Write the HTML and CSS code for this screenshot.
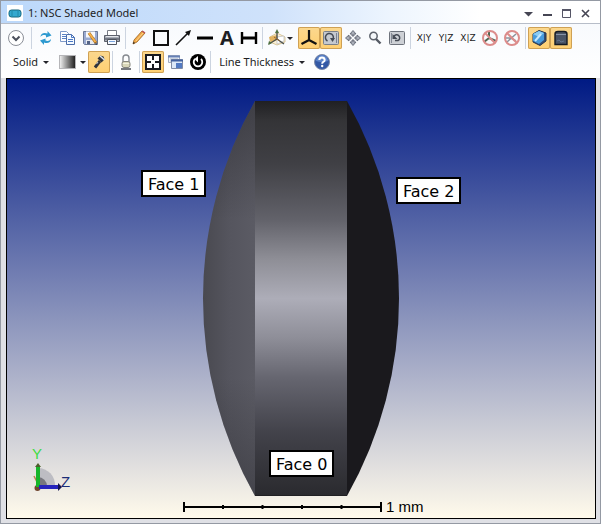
FILE: index.html
```html
<!DOCTYPE html>
<html lang="en">
<head>
<meta charset="utf-8">
<title>1: NSC Shaded Model</title>
<link rel="stylesheet" href="styles.css">
</head>
<body>
<main class="window">
  <header class="titlebar">
    <svg class="app-icon" viewBox="0 0 16 16" aria-hidden="true"><rect width="16" height="16" fill="#fff"/><rect x="2" y="5" width="12" height="7" rx="2.500" fill="#35a9cf" stroke="#17677f"/><path d="M5 5v7M11 5v7" stroke="#2389a8"/></svg>
    <h1 class="title">1: NSC Shaded Model</h1>
    <div class="window-controls">
      <button class="control" aria-label="Window menu"><svg viewBox="0 0 19 20"><path d="M5 9h9l-4.500 4.500z" fill="#454553"/></svg></button>
      <button class="control" aria-label="Minimize"><svg viewBox="0 0 19 20"><path d="M5 12h9" stroke="#454553" stroke-width="2"/></svg></button>
      <button class="control" aria-label="Maximize"><svg viewBox="0 0 19 20"><path d="M5.500 7v7.500h8V7" fill="none" stroke="#555566"/><path d="M5 7h9" stroke="#555566" stroke-width="2"/></svg></button>
      <button class="control" aria-label="Close"><svg viewBox="0 0 19 20"><path d="M6 7l7 7M13 7l-7 7" stroke="#454553" stroke-width="1.600"/></svg></button>
    </div>
  </header>

  <div class="toolbars">
    <div class="toolbar">
      <button class="tool" aria-label="Settings"><svg viewBox="0 0 22 22"><circle cx="11" cy="11" r="7.500" fill="#fff" stroke="#8b8f98"/><path d="M7.500 9.500l3.500 3.500 3.500-3.500" fill="none" stroke="#4b505c" stroke-width="2"/></svg></button>
      <span class="separator wide"></span>
      <button class="tool" aria-label="Update"><svg viewBox="0 0 22 22"><path d="M5.500 10C5.500 6.500 9 5 12.500 6.500V4l4 4.500-5.500 2V8.500C9 7.500 7 8 5.500 10zM16 12c0 3.500-3.500 5-7 3.500V18l-4-4.500 5.500-2v2c2 1 4 .5 5.500-1.500z" fill="#2e9ad0"/></svg></button>
      <button class="tool" aria-label="Copy"><svg viewBox="0 0 22 22"><path d="M3.500 4.500h6l2 2v8h-8z" fill="#fff" stroke="#7f9ac9"/><path d="M5 7.500h4M5 9.500h4M5 11.500h4" stroke="#5982c6"/><path d="M9.500 7.500h5l3 3v7h-8z" fill="#f5faff" stroke="#4b6ca8"/><path d="M14.500 7.500v3h3M11 12.500h5M11 14.500h5" fill="none" stroke="#4b78c4"/></svg></button>
      <button class="tool" aria-label="Save"><svg viewBox="0 0 22 22"><path d="M4.500 4.500h14v13h-13l-1-1z" fill="#9aabd2" stroke="#6b7895"/><path d="M7 4.500h9v6H7z" fill="#f7f8fb"/><path d="M7 13h8v4H7z" fill="#e6e9ef"/><path d="M8 14h3v3H8z" fill="#546386"/><path d="M10 6l7 10" stroke="#a56d20" stroke-width="3"/><path d="M10 6l6.500 9" stroke="#f5b14b" stroke-width="2"/><path d="M16 17l2 1-.5-2z" fill="#333"/></svg></button>
      <button class="tool" aria-label="Print"><svg viewBox="0 0 22 22"><path d="M6.500 9V3.500h9V9" fill="#fff" stroke="#777b84"/><path d="M3.500 8.500h15v6h-15z" fill="#a6abb5" stroke="#5c606b"/><path d="M5 9.500h12" stroke="#e4e6ea"/><path d="M4 12h14" stroke="#444954"/><path d="M6.500 12.500h9v5h-9z" fill="#f6f9ff" stroke="#4e535e"/><path d="M8 14.500h6" stroke="#79a4dc"/></svg></button>
      <span class="separator"></span>
      <button class="tool" aria-label="Pencil"><svg viewBox="0 0 22 22"><path d="M5 17l1-4 8-9 3 2-8 9z" fill="#f4aa4a" stroke="#99631f" stroke-width=".8"/><path d="M8 14l7-8" stroke="#fbd78c"/><path d="M13.500 4.500l1-1 3 2-1 1z" fill="#b9565a"/><path d="M5 17l.6-2.300 1.400 1.300z" fill="#222"/></svg></button>
      <button class="tool" aria-label="Rectangle"><svg viewBox="0 0 22 22"><path d="M4 4h14v14H4z" fill="none" stroke="#111" stroke-width="2"/></svg></button>
      <button class="tool" aria-label="Arrow"><svg viewBox="0 0 22 22"><path d="M4 18L16 6" stroke="#111" stroke-width="1.600"/><path d="M19 3l-2 6-4-4z" fill="#111"/></svg></button>
      <button class="tool" aria-label="Line"><svg viewBox="0 0 22 22"><path d="M3 11h16" stroke="#000" stroke-width="3"/></svg></button>
      <button class="tool letter">A</button>
      <button class="tool" aria-label="Dimension"><svg viewBox="0 0 22 22"><path d="M4 5v12M18 5v12" stroke="#000" stroke-width="2.400"/><path d="M5 11h12" stroke="#000" stroke-width="3"/></svg></button>
      <span class="separator"></span>
      <button class="tool drop" aria-label="View orientation"><svg viewBox="0 0 22 22"><path d="M5 10l7-4 8 4v5l-8 3-7-3z" fill="#fbf1d8" stroke="#cdb883" stroke-width=".8"/><path d="M12 10l7-1v5l-7 3z" fill="#fff" stroke="#bbb" stroke-width=".7"/><path d="M4 10l8-2v5l-6 3z" fill="#dda84b" opacity=".85"/><path d="M12 4v8M12 12l-8 5M12 12l7 5" fill="none" stroke="#4a5150" stroke-width="1.400"/><path d="M12 2l-2 4h4zM3 18l1-4 3 2z" fill="#4f7040"/><path d="M9 10l6 4" stroke="#9a6a31"/></svg><span class="caret"></span></button>
      <button class="tool active" aria-label="Show axes" aria-pressed="true"><svg viewBox="0 0 22 22"><path d="M11 3v10L3.500 17M11 13l7.500 4" fill="none" stroke="#111" stroke-width="2.200"/></svg></button>
      <button class="tool active" aria-label="Rotate" aria-pressed="true"><svg viewBox="0 0 22 22"><rect x="3.500" y="4.500" width="15" height="13" rx="1" fill="#c5c9cf" stroke="#7b8088"/><path d="M7.500 14a4 4 0 1 1 5-1" fill="none" stroke="#454b55" stroke-width="1.500"/><path d="M10 11h5l-2.500 4z" fill="#454b55"/><path d="M16.500 6v10" stroke="#7a8190"/></svg></button>
      <button class="tool" aria-label="Pan"><svg viewBox="0 0 22 22"><path d="M11 3.500L14 7h-2v2h-2V7H8zM11 18.500L8 15h2v-2h2v2h2zM3.500 11L7 8v2h2v2H7v2zM18.500 11L15 14v-2h-2v-2h2V8z" fill="#a9aeb8" stroke="#626875" stroke-width=".9"/></svg></button>
      <button class="tool" aria-label="Zoom"><svg viewBox="0 0 22 22"><circle cx="9.500" cy="9" r="3.700" fill="#f4f7fa" stroke="#5e636d" stroke-width="1.500"/><path d="M12 12l4.500 4.500" stroke="#555a64" stroke-width="2.400"/></svg></button>
      <button class="tool" aria-label="Reset view"><svg viewBox="0 0 22 22"><rect x="3.500" y="4.500" width="15" height="13" rx="1" fill="#cdd0d5" stroke="#6e737c"/><path d="M9 13.500h3a3 3 0 1 0-4-4" fill="none" stroke="#454b55" stroke-width="1.500"/><path d="M6.500 7v5h5z" fill="#454b55"/><path d="M5.500 6v10" stroke="#858b96"/></svg></button>
      <span class="separator"></span>
      <button class="tool plane">X|Y</button>
      <button class="tool plane">Y|Z</button>
      <button class="tool plane">X|Z</button>
      <button class="tool" aria-label="Hide axes"><svg viewBox="0 0 22 22"><path d="M10 5v6l-5 4M10 11l7 3" fill="none" stroke="#506653" stroke-width="2"/><circle cx="11" cy="11" r="7" fill="none" stroke="#dc8c8b" stroke-width="2"/><path d="M6 6l10 10" stroke="#dc8c8b" stroke-width="2"/></svg></button>
      <button class="tool" aria-label="Hide rays"><svg viewBox="0 0 22 22"><path d="M6 15l9-8M5 11h5l5 3" fill="none" stroke="#8b929c" stroke-width="1.500"/><circle cx="11" cy="11" r="7" fill="none" stroke="#dc8c8b" stroke-width="2"/><path d="M6 6l10 10" stroke="#dc8c8b" stroke-width="2"/></svg></button>
      <span class="separator"></span>
      <button class="tool active" aria-label="Solid faces" aria-pressed="true"><svg viewBox="0 0 22 22"><path d="M5 7l6-3.500L18 6v8l-6 4.500L5 15z" fill="#344d72" stroke="#26364f"/><path d="M5 7l6-3 5 2v7l-5 4-6-3z" fill="#489bdc"/><path d="M5 7l6-3 5 2-5 4z" fill="#8bccf4"/><path d="M7 14l6-7" stroke="#c4e8ff" stroke-width="2"/></svg></button>
      <button class="tool active" aria-label="Dark solid" aria-pressed="true"><svg viewBox="0 0 22 22"><path d="M5 7q0-2.500 3-2.500h6q3 0 3 2.500v10.500H5z" fill="#4a5465" stroke="#161b24" stroke-width="1.400"/><path d="M6 7.500h10" stroke="#8793a6"/><path d="M7 14l2-1 2 2 3-1" fill="none" stroke="#65758e"/></svg></button>
    </div>

    <div class="toolbar second">
      <button class="text-tool">Solid<span class="caret"></span></button>
      <button class="tool drop" aria-label="Background"><span class="swatch"></span><span class="caret"></span></button>
      <button class="tool active" aria-label="Lighting" aria-pressed="true"><svg viewBox="0 0 22 22"><path d="M7 16.500L12 10" stroke="#30343c" stroke-width="3"/><path d="M9.500 7.500l4 4 3-3-1-3-3-1z" fill="#30343c"/><path d="M12 5l4.500 4" stroke="#dce3ef" stroke-width="1.500"/><path d="M8.500 13l1.500-2" stroke="#c8ccd4"/></svg></button>
      <span class="separator"></span>
      <button class="tool" aria-label="Lock"><svg viewBox="0 0 22 22"><path d="M8 11V7a3 3 0 0 1 6 0v4" fill="none" stroke="#868a90" stroke-width="1.400"/><rect x="7" y="10.500" width="8" height="6" rx="2" fill="#d9d7b9" stroke="#84847d"/><path d="M8 12.500h6" stroke="#f3f2df"/><path d="M6 18h10" stroke="#494d53" stroke-width="1.500"/></svg></button>
      <span class="separator"></span>
      <button class="tool active" aria-label="Fit window" aria-pressed="true"><svg viewBox="0 0 22 22"><path d="M4 4h14v14H4z" fill="#fff" stroke="#17191f" stroke-width="2"/><path d="M11 5v4M11 13v4M5 11h4M13 11h4" stroke="#17191f" stroke-width="2"/></svg></button>
      <button class="tool" aria-label="Clone window"><svg viewBox="0 0 22 22"><path d="M4.500 4.500h11v7h-11z" fill="#eef4fc" stroke="#a2abc0"/><path d="M4 5.500h12" stroke="#6680b5" stroke-width="2"/><path d="M6 8h8M6 10h6" stroke="#a8b1c1"/><path d="M7.500 8.500h11v9h-11z" fill="#dce8f8" stroke="#818ca5"/><path d="M7 9.500h12" stroke="#44629f" stroke-width="2"/><path d="M12 12h6v5h-6z" fill="#537ac2"/></svg></button>
      <button class="tool" aria-label="Auto update"><svg viewBox="0 0 22 22"><circle cx="12" cy="11" r="8" fill="#000"/><path d="M9 8a4.300 4.300 0 1 0 6 0" fill="none" stroke="#fff" stroke-width="1.800"/><path d="M12 5v6.500L8.500 8z" fill="#fff"/></svg></button>
      <span class="separator"></span>
      <button class="text-tool">Line Thickness<span class="caret"></span></button>
      <button class="tool" aria-label="Help"><svg viewBox="0 0 22 22"><circle cx="11" cy="11" r="7.500" fill="#3459a5" stroke="#7e8ca9"/><path d="M5 10a6 6 0 0 1 12 0q-6 2-12 0z" fill="#5f86ca"/><path d="M8.300 9q.2-2.500 2.700-2.500T13.700 9q0 1.500-1.700 2.200-.8.400-.8 1.600" fill="none" stroke="#fff" stroke-width="2"/><circle cx="11.200" cy="15" r="1.200" fill="#fff"/></svg></button>
    </div>
  </div>

  <section class="viewport" aria-label="Shaded model view">
    <svg class="scene" viewBox="7 79 588 439">
      <defs>
        <linearGradient id="edge" x1="0" y1="0" x2="0" y2="1">
          <stop offset="0" stop-color="#202023"/><stop offset=".05" stop-color="#343437"/><stop offset=".16" stop-color="#404045"/><stop offset=".3" stop-color="#62626a"/><stop offset=".4" stop-color="#8e8e96"/><stop offset=".5" stop-color="#adadb8"/><stop offset=".6" stop-color="#8e8e98"/><stop offset=".7" stop-color="#666670"/><stop offset=".84" stop-color="#42424a"/><stop offset="1" stop-color="#2a2a2e"/>
        </linearGradient>
        <linearGradient id="left-face" x1="0" y1="0" x2="1" y2="0"><stop offset="0" stop-color="#494950"/><stop offset=".5" stop-color="#55555e"/><stop offset="1" stop-color="#5b5b64"/></linearGradient>
        <linearGradient id="shade" x1="0" y1="0" x2="0" y2="1"><stop offset="0" stop-color="#222226" stop-opacity=".5"/><stop offset=".3" stop-color="#222226" stop-opacity="0"/><stop offset=".7" stop-color="#222226" stop-opacity="0"/><stop offset="1" stop-color="#222226" stop-opacity=".4"/></linearGradient>
      </defs>
      <path d="M255 101A401 401 0 0 0 255 496z" fill="url(#left-face)"/>
      <path d="M255 101A401 401 0 0 0 255 496z" fill="url(#shade)"/>
      <path d="M347 101A401 401 0 0 1 347 496z" fill="#1a191d"/>
      <path d="M255 101h92v395h-92z" fill="url(#edge)"/>
      <path d="M255 101.500h92M255 495.500h92" stroke="#202023"/>

      <g class="face-label">
        <rect x="142" y="171" width="63" height="25"/><text x="148" y="190">Face 1</text>
        <rect x="397" y="178" width="63" height="25"/><text x="403" y="197">Face 2</text>
        <rect x="270" y="451" width="63" height="25"/><text x="276" y="470">Face 0</text>
      </g>

      <path d="M183 507h198M184 502v10M381 502v10" fill="none" stroke="#000" stroke-width="2"/>
      <path d="M223 505v4M262.500 505v4M302 505v4M341.500 505v4" stroke="#000" stroke-width="2"/>
      <text class="scale-text" x="386" y="512">1 mm</text>

      <path d="M38 468a17 17 0 0 1 17 18H38z" fill="#bdbdc3"/>
      <path d="M38 477a9 9 0 0 1 9 9h-9z" fill="#77777e"/>
      <path d="M34 476l6 12" stroke="#b98252" stroke-width="1.500"/>
      <circle cx="37.500" cy="488" r="3" fill="#70452e"/>
      <path d="M38 487V466" stroke="#16b52a" stroke-width="4"/><path d="M38 463l-3 4h6z" fill="#4c5e2c"/>
      <path d="M39 487h19" stroke="#2624bd" stroke-width="4"/><path d="M62 487l-4-4v8z" fill="#14144e"/>
      <text class="axis-y" x="32" y="459">Y</text>
      <text class="axis-z" x="61" y="487">Z</text>
    </svg>
  </section>
</main>
</body>
</html>
```
FILE: styles.css
```css
* { box-sizing: border-box; }

body {
  margin: 0;
  background: #fff;
  color: #1e1e24;
  font: 11px/16px "Noto Sans", "Open Sans", sans-serif;
}

button {
  margin: 0;
  padding: 0;
  border: 0;
  background: none;
  color: inherit;
  font: inherit;
}

.window {
  display: flex;
  flex-direction: column;
  height: 100vh;
  border: 1px solid #9499a3;
  background: #dfe0e5;
}

.titlebar {
  display: flex;
  align-items: center;
  flex: none;
  height: 23px;
  padding: 2px 5px 0 6px;
  border-bottom: 1px solid #b7bdc8;
  background: linear-gradient(90deg, #bcd8fa, #cfe2fb 45%, #edf5fe 65%, #fff 80%);
}

.app-icon { width: 16px; height: 16px; }

.title {
  flex: 1;
  margin: 0 0 0 5px;
  font-size: 11px;
  font-weight: 400;
}

.window-controls { display: flex; }

.control { width: 19px; height: 20px; }

.control svg,
.tool svg { display: block; }

.toolbars {
  flex: none;
  height: 54px;
  padding: 2px 4px;
  background: linear-gradient(#f8fafd, #fff);
}

.toolbar {
  display: flex;
  align-items: center;
  height: 24px;
}

.tool {
  flex: none;
  width: 22px;
  height: 22px;
}

.tool svg { width: 22px; height: 22px; }

.active {
  border-radius: 2px;
  background: linear-gradient(#fbd88f, #ffcf70);
  box-shadow: inset 0 0 0 1px #cfa154;
}

.drop {
  display: flex;
  align-items: center;
  width: 33px;
}

.caret {
  display: inline-block;
  border: 3px solid transparent;
  border-top: 3px solid #24242a;
  border-bottom: 0;
}

.letter {
  font: 700 20px/22px "Noto Sans", sans-serif;
}

.plane {
  color: #222;
  font: 9px/22px "DejaVu Sans", sans-serif;
  white-space: nowrap;
}

.separator {
  flex: none;
  width: 1px;
  height: 22px;
  margin: 0 2px;
  background: #ccd4e0;
}

.separator.wide { margin: 0 3px 0 4px; }

.text-tool {
  display: flex;
  align-items: center;
  gap: 5px;
  padding: 0 6px;
  line-height: 22px;
}

.second { padding-left: 2px; }

.swatch {
  width: 17px;
  height: 14px;
  margin: 0 4px;
  border: 1px solid #b6b6b9;
  background: linear-gradient(90deg, #eee, #222);
}

.viewport {
  flex: 1;
  min-height: 0;
  margin: 0 4px 4px 5px;
  border: 1px solid #000;
  background: linear-gradient(#001a84, #fffaeb);
}

.scene {
  display: block;
  width: 100%;
  height: 100%;
}

.face-label rect {
  fill: #fff;
  stroke: #000;
  stroke-width: 2px;
}

.face-label text {
  font: 16px "DejaVu Sans", sans-serif;
}

.scale-text { font: 15px "Liberation Sans", sans-serif; }

.axis-y,
.axis-z { font: 15px "Liberation Sans", sans-serif; }

.axis-y { fill: #3fdc43; }

.axis-z { fill: #1b2d78; }
```
